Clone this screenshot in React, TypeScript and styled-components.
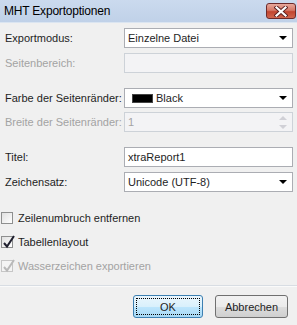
import React from "react";
import styled, { createGlobalStyle } from "styled-components";

const Global = createGlobalStyle`
  html, body { margin: 0; padding: 0; background: #f0f0f0; }
  body { font-family: "Liberation Sans", Arial, sans-serif; font-size: 11px; color: #1e1e1e; }
`;

const Window = styled.div`
  width: 297px;
  height: 325px;
  background: #f0f0f0;
  display: flex;
  flex-direction: column;
  overflow: hidden;
`;

const TitleBar = styled.div`
  height: 22px;
  flex: 0 0 22px;
  display: flex;
  align-items: center;
  padding-left: 4px;
  background: linear-gradient(#cbdaee, #c0d1e8);
  border-bottom: 1px solid #dbe5f1;
`;

const TitleText = styled.span`
  font-size: 12px;
  color: #000;
  letter-spacing: -0.2px;
`;

const CloseButton = styled.div`
  margin-left: auto;
  margin-right: 1px;
  width: 30px;
  height: 16px;
  box-sizing: border-box;
  border: 1px solid #6d2a2a;
  border-radius: 3px;
  background: linear-gradient(#e8a89c 0%, #d57866 45%, #c2452f 55%, #d0664e 100%);
  display: flex;
  align-items: center;
  justify-content: center;
`;

const Content = styled.div`
  display: flex;
  flex-direction: column;
  padding: 5px 4px 0 5px;
`;

const FieldRow = styled.div<{ $top: number }>`
  display: grid;
  grid-template-columns: 119px 1fr;
  align-items: center;
  height: 20px;
  margin-top: ${(p) => p.$top}px;
`;

const Label = styled.span<{ $disabled?: boolean }>`
  color: ${(p) => (p.$disabled ? "#a3a3a3" : "#1e1e1e")};
  white-space: nowrap;
`;

const Field = styled.div<{ $disabled?: boolean }>`
  height: 20px;
  box-sizing: border-box;
  border: 1px solid ${(p) => (p.$disabled ? "#cdd2d8" : "#abadb3")};
  background: ${(p) => (p.$disabled ? "#f3f3f5" : "#ffffff")};
  color: ${(p) => (p.$disabled ? "#a3a3a3" : "#1e1e1e")};
  display: flex;
  align-items: center;
  padding-left: 3px;
  padding-right: 2px;
`;

const FieldText = styled.span`
  flex: 1;
  white-space: nowrap;
`;

const Arrow = styled.div`
  width: 0;
  height: 0;
  border-left: 4px solid transparent;
  border-right: 4px solid transparent;
  border-top: 4px solid #000;
  margin-right: 3px;
`;

const Swatch = styled.span`
  width: 21px;
  height: 9px;
  background: #000;
  border: 1px solid #444;
  box-sizing: border-box;
  margin-left: 4px;
  margin-right: 3px;
`;

const Spin = styled.div`
  display: flex;
  flex-direction: column;
  justify-content: center;
  gap: 5px;
  margin-right: 3px;
`;

const SpinArrow = styled.div<{ $up?: boolean }>`
  width: 0;
  height: 0;
  border-left: 4px solid transparent;
  border-right: 4px solid transparent;
  ${(p) => (p.$up ? "border-bottom: 4px solid #d0d0d6;" : "border-top: 4px solid #d0d0d6;")}
`;

const Checks = styled.div`
  display: flex;
  flex-direction: column;
  margin-top: 14px;
  padding-left: 1px;
`;

const CheckRow = styled.div<{ $disabled?: boolean }>`
  height: 24px;
  display: flex;
  align-items: center;
  gap: 5px;
  color: ${(p) => (p.$disabled ? "#a3a3a3" : "#1e1e1e")};
`;

const Box = styled.div<{ $disabled?: boolean }>`
  width: 12px;
  height: 12px;
  box-sizing: border-box;
  border: 1px solid ${(p) => (p.$disabled ? "#c6c6c6" : "#8e8f8f")};
  background: ${(p) => (p.$disabled ? "#f4f4f4" : "linear-gradient(135deg, #e0e0e0, #ffffff)")};
  position: relative;
  flex: 0 0 12px;
`;

const CheckMark = styled.svg`
  position: absolute;
  left: 0px;
  top: -3px;
`;

const Separator = styled.div`
  height: 1px;
  background: #d8dde3;
  margin-top: 7px;
  border-bottom: 1px solid #fafafa;
`;

const Buttons = styled.div`
  display: flex;
  justify-content: flex-end;
  gap: 12px;
  padding: 8px 9px 0 0;
`;

const Button = styled.div<{ $default?: boolean; $w: number }>`
  width: ${(p) => p.$w}px;
  height: 23px;
  box-sizing: border-box;
  border: 1px solid ${(p) => (p.$default ? "#3c7fb1" : "#707070")};
  border-radius: 3px;
  background: ${(p) =>
    p.$default
      ? "linear-gradient(#eaf6fd 0%, #d9f0fc 50%, #bee6fd 51%, #a7d9f5 100%)"
      : "linear-gradient(#f2f2f2 0%, #ebebeb 50%, #dddddd 51%, #cfcfcf 100%)"};
  display: flex;
  align-items: center;
  justify-content: center;
  padding: 2px;
  color: #1e1e1e;
`;

const Focus = styled.div`
  flex: 1;
  align-self: stretch;
  border: 1px dotted #000;
  display: flex;
  align-items: center;
  justify-content: center;
`;

function Check({ disabled }: { disabled?: boolean }) {
  const c = disabled ? "#b9b9b9" : "#1f1f2e";
  return (
    <CheckMark width="14" height="15" viewBox="0 0 14 15">
      <path d="M2 9 L5 12.5 L12 2" fill="none" stroke={c} strokeWidth="2" strokeLinejoin="miter" />
    </CheckMark>
  );
}

export default function App() {
  return (
    <>
      <Global />
      <Window>
        <TitleBar>
          <TitleText>MHT Exportoptionen</TitleText>
          <CloseButton>
            <svg width="14" height="11" viewBox="0 0 14 11">
              <path d="M2.5 1.5 L11.5 9.5 M11.5 1.5 L2.5 9.5" stroke="#5a1f1f" strokeWidth="4" strokeLinecap="square" />
              <path d="M2.5 1.5 L11.5 9.5 M11.5 1.5 L2.5 9.5" stroke="#ffffff" strokeWidth="2.2" strokeLinecap="square" />
            </svg>
          </CloseButton>
        </TitleBar>
        <Content>
          <FieldRow $top={0}>
            <Label>Exportmodus:</Label>
            <Field>
              <FieldText>Einzelne Datei</FieldText>
              <Arrow />
            </Field>
          </FieldRow>
          <FieldRow $top={5}>
            <Label $disabled>Seitenbereich:</Label>
            <Field $disabled />
          </FieldRow>
          <FieldRow $top={15}>
            <Label>Farbe der Seitenränder:</Label>
            <Field>
              <Swatch />
              <FieldText>Black</FieldText>
              <Arrow />
            </Field>
          </FieldRow>
          <FieldRow $top={4}>
            <Label $disabled>Breite der Seitenränder:</Label>
            <Field $disabled>
              <FieldText>1</FieldText>
              <Spin>
                <SpinArrow $up />
                <SpinArrow />
              </Spin>
            </Field>
          </FieldRow>
          <FieldRow $top={15}>
            <Label>Titel:</Label>
            <Field>
              <FieldText>xtraReport1</FieldText>
            </Field>
          </FieldRow>
          <FieldRow $top={5}>
            <Label>Zeichensatz:</Label>
            <Field>
              <FieldText>Unicode (UTF-8)</FieldText>
              <Arrow />
            </Field>
          </FieldRow>
        </Content>
        <Checks>
          <CheckRow>
            <Box />
            <span>Zeilenumbruch entfernen</span>
          </CheckRow>
          <CheckRow>
            <Box>
              <Check />
            </Box>
            <span>Tabellenlayout</span>
          </CheckRow>
          <CheckRow $disabled>
            <Box $disabled>
              <Check disabled />
            </Box>
            <span>Wasserzeichen exportieren</span>
          </CheckRow>
        </Checks>
        <Separator />
        <Buttons>
          <Button $default $w={70}>
            <Focus>OK</Focus>
          </Button>
          <Button $w={73}>Abbrechen</Button>
        </Buttons>
      </Window>
    </>
  );
}
